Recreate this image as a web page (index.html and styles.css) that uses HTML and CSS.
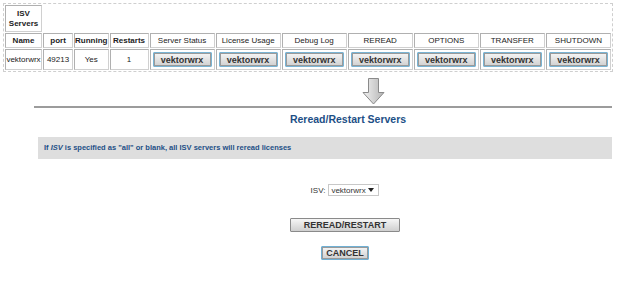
FILE: index.html
```html
<!DOCTYPE html>
<html>
<head>
<meta charset="utf-8">
<link rel="stylesheet" href="styles.css">
</head>
<body>
<div class="top">
  <table class="isv">
    <tr>
      <td class="cell head">ISV<br>Servers</td>
      <td colspan="10" class="blank"></td>
    </tr>
    <tr class="hdr">
      <td class="cell c-name">Name</td>
      <td class="cell c-port">port</td>
      <td class="cell c-run">Running</td>
      <td class="cell c-rst">Restarts</td>
      <td class="cell c-btn">Server Status</td>
      <td class="cell c-btn">License Usage</td>
      <td class="cell c-btn">Debug Log</td>
      <td class="cell c-btn">REREAD</td>
      <td class="cell c-btn">OPTIONS</td>
      <td class="cell c-btn">TRANSFER</td>
      <td class="cell c-btn">SHUTDOWN</td>
    </tr>
    <tr class="data">
      <td class="cell">vektorwrx</td>
      <td class="cell">49213</td>
      <td class="cell">Yes</td>
      <td class="cell">1</td>
      <td class="cell"><button class="vbtn">vektorwrx</button></td>
      <td class="cell"><button class="vbtn">vektorwrx</button></td>
      <td class="cell"><button class="vbtn">vektorwrx</button></td>
      <td class="cell"><button class="vbtn">vektorwrx</button></td>
      <td class="cell"><button class="vbtn">vektorwrx</button></td>
      <td class="cell"><button class="vbtn">vektorwrx</button></td>
      <td class="cell"><button class="vbtn">vektorwrx</button></td>
    </tr>
  </table>
</div>
<div class="arrow-row">
  <svg class="arrow" width="23" height="27" viewBox="0 0 23 27">
    <defs>
      <linearGradient id="ag" x1="0" y1="0" x2="1" y2="0">
        <stop offset="0" stop-color="#f2f2f2"/>
        <stop offset="1" stop-color="#b4b4b4"/>
      </linearGradient>
    </defs>
    <path d="M6.5 0.5 H16.5 V14.5 H22 L11.5 26 L1 14.5 H6.5 Z" fill="url(#ag)" stroke="#8a8a8a" stroke-width="1"/>
  </svg>
</div>
<div class="panel">
  <h1 class="title">Reread/Restart Servers</h1>
  <div class="note">If <i>ISV</i> is specified as "all" or blank, all ISV servers will reread licenses</div>
  <div class="center">
    <div class="form-row">
      <label class="lbl">ISV:</label>
      <div class="select"><span>vektorwrx</span><span class="caret"></span></div>
    </div>
    <div class="btn-row"><button class="gbtn wide">REREAD/RESTART</button></div>
    <div class="btn-row cancel-row"><button class="gbtn blue">CANCEL</button></div>
  </div>
</div>
</body>
</html>
```
FILE: styles.css
```css
* { box-sizing: border-box; }
body {
  margin: 0;
  background: #fff;
  font-family: "Liberation Sans", Arial, sans-serif;
  color: #222;
}
.top { padding: 3px 0 0 3px; }
.isv {
  border: 1px dashed #cfcfcf;
  border-spacing: 1px;
  width: 610px;
  font-size: 8px;
  text-align: center;
}
.isv td { padding: 0; }
.cell {
  border: 1px solid #b0b0b0;
  border-right-color: #d0d0d0;
  border-bottom-color: #d0d0d0;
}
.head { height: 27px; font-weight: bold; line-height: 10px; width: 37px; }
.blank { border: none; }
.hdr td { height: 15px; font-weight: bold; }
.hdr td.c-btn { font-weight: normal; color: #222; }
.c-port { width: 30px; }
.c-run { width: 34px; }
.c-rst { width: 39px; }
.c-btn { width: 65px; }
.data td { height: 21px; }
.vbtn {
  width: 59px;
  height: 15px;
  padding: 0;
  font-family: "Liberation Sans", Arial, sans-serif;
  font-size: 9px;
  font-weight: bold;
  color: #333;
  background: linear-gradient(#f6f6f6, #d0d0d0);
  border: 1px solid #79b4d4;
  box-shadow: inset 0 0 0 1px #9a9a9a;
  border-radius: 1px;
}
.arrow-row { padding: 6px 0 0 362px; height: 34px; }
.arrow { display: block; }
.panel {
  margin-left: 34px;
  width: 578px;
  border-top: 2px solid #9c9c9c;
}
.title {
  margin: 5px 0 0 50px;
  text-align: center;
  font-size: 10.5px;
  font-weight: bold;
  color: #1d4f86;
}
.note {
  margin: 12px 0 0 4px;
  height: 22px;
  background: #dedede;
  color: #1d4f86;
  font-size: 7.5px;
  font-weight: bold;
  padding: 6px 0 0 6px;
}
.center { padding-left: 44px; }
.form-row {
  display: flex;
  justify-content: center;
  align-items: center;
  gap: 3px;
  margin-top: 25px;
}
.lbl { font-size: 8px; color: #333; }
.select {
  width: 51px;
  height: 12px;
  border: 1px solid #c8c8c8;
  background: #fff;
  font-size: 8px;
  display: flex;
  align-items: center;
  justify-content: space-between;
  padding: 0 4px 0 2px;
  color: #333;
}
.caret {
  width: 0; height: 0;
  border-left: 3px solid transparent;
  border-right: 3px solid transparent;
  border-top: 4px solid #222;
}
.btn-row { display: flex; justify-content: center; margin-top: 22px; }
.cancel-row { margin-top: 14px; }
.gbtn {
  height: 14px;
  padding: 0;
  font-family: "Liberation Sans", Arial, sans-serif;
  font-size: 9px;
  font-weight: bold;
  color: #333;
  background: linear-gradient(#f6f6f6, #cfcfcf);
  border: 1px solid #8a8a8a;
  border-radius: 1px;
}
.wide { width: 110px; }
.blue { width: 48px; border-color: #6fb0d4; box-shadow: inset 0 0 0 1px #9a9a9a; }
```
